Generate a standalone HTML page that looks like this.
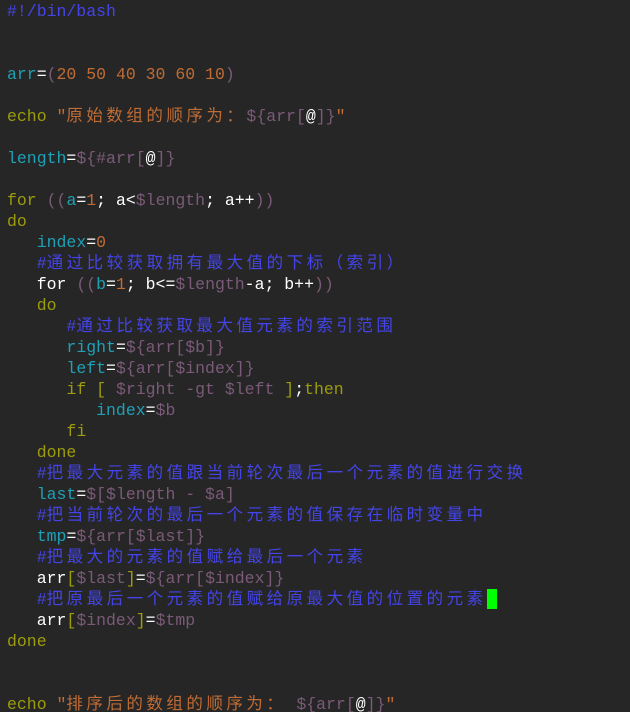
<!DOCTYPE html>
<html><head><meta charset="utf-8"><style>
html,body{margin:0;padding:0;background:#262626;width:630px;height:712px;overflow:hidden}
#t{padding:1px 0 0 7px;font-family:"Liberation Mono","Noto Sans CJK SC",monospace;font-size:16.5px;line-height:21px;color:#fff}
#t div{height:21px;white-space:pre;overflow:visible}
.c{color:#4444e8}.k{color:#9c9c0c}.v{color:#1ea0b6}.n{color:#c06c34}.p{color:#7a5a78}
.z{font-family:"Noto Sans CJK SC",sans-serif;letter-spacing:3.5px;line-height:0}
.cur{display:inline-block;width:10px;height:20px;background:#00ff00;vertical-align:-5px;line-height:0}
</style></head><body><div id="t">
<div><span class="c">#!/bin/bash</span></div>
<div></div>
<div></div>
<div><span class="v">arr</span>=<span class="p">(</span><span class="n">20 50 40 30 60 10</span><span class="p">)</span></div>
<div></div>
<div><span class="k">echo</span> <span class="n">"<span class="z">原始数组的顺序为：</span></span><span class="p">${arr[</span>@<span class="p">]}</span><span class="n">"</span></div>
<div></div>
<div><span class="v">length</span>=<span class="p">${#arr[</span>@<span class="p">]}</span></div>
<div></div>
<div><span class="k">for</span> <span class="p">((</span><span class="v">a</span>=<span class="n">1</span>; a&lt;<span class="p">$length</span>; a++<span class="p">))</span></div>
<div><span class="k">do</span></div>
<div>   <span class="v">index</span>=<span class="n">0</span></div>
<div>   <span class="c">#<span class="z">通过比较获取拥有最大值的下标（索引）</span></span></div>
<div>   for <span class="p">((</span><span class="v">b</span>=<span class="n">1</span>; b&lt;=<span class="p">$length</span>-a; b++<span class="p">))</span></div>
<div>   <span class="k">do</span></div>
<div>      <span class="c">#<span class="z">通过比较获取最大值元素的索引范围</span></span></div>
<div>      <span class="v">right</span>=<span class="p">${arr[$b]}</span></div>
<div>      <span class="v">left</span>=<span class="p">${arr[$index]}</span></div>
<div>      <span class="k">if [</span> <span class="p">$right -gt $left</span> <span class="k">]</span>;<span class="k">then</span></div>
<div>         <span class="v">index</span>=<span class="p">$b</span></div>
<div>      <span class="k">fi</span></div>
<div>   <span class="k">done</span></div>
<div>   <span class="c">#<span class="z">把最大元素的值跟当前轮次最后一个元素的值进行交换</span></span></div>
<div>   <span class="v">last</span>=<span class="p">$[$length - $a]</span></div>
<div>   <span class="c">#<span class="z">把当前轮次的最后一个元素的值保存在临时变量中</span></span></div>
<div>   <span class="v">tmp</span>=<span class="p">${arr[$last]}</span></div>
<div>   <span class="c">#<span class="z">把最大的元素的值赋给最后一个元素</span></span></div>
<div>   arr<span class="k">[</span><span class="p">$last</span><span class="k">]</span>=<span class="p">${arr[$index]}</span></div>
<div>   <span class="c">#<span class="z">把原最后一个元素的值赋给原最大值的位置的元素</span></span><span class="cur"></span></div>
<div>   arr<span class="k">[</span><span class="p">$index</span><span class="k">]</span>=<span class="p">$tmp</span></div>
<div><span class="k">done</span></div>
<div></div>
<div></div>
<div><span class="k">echo</span> <span class="n">"<span class="z">排序后的数组的顺序为：</span> </span><span class="p">${arr[</span>@<span class="p">]}</span><span class="n">"</span></div>
</div></body></html>
